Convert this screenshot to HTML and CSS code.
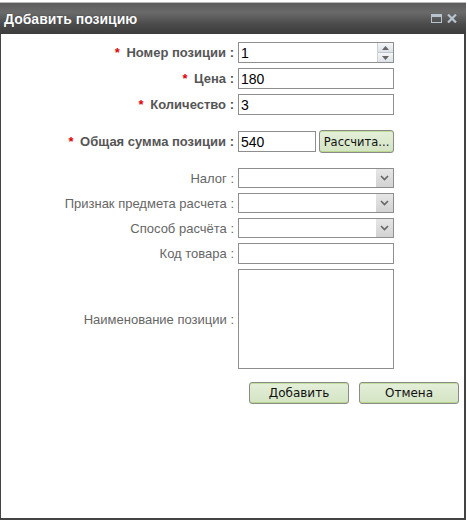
FILE: index.html
```html
<!DOCTYPE html>
<html lang="ru">
<head>
<meta charset="utf-8">
<title>Добавить позицию</title>
<link rel="stylesheet" href="styles.css">
</head>
<body>
<div class="window">
  <div class="titlebar">
    <span class="title">Добавить позицию</span>
    <span class="tools">
      <svg class="tool" width="11" height="9" viewBox="0 0 11 9"><rect x="0.5" y="0.5" width="10" height="8" fill="none" stroke="#b8c4d0" stroke-width="1"/><rect x="1" y="1" width="9" height="2" fill="#b8c4d0"/></svg>
      <svg class="tool" width="10" height="9" viewBox="0 0 10 9"><path d="M1 0.5 L9 8.5 M9 0.5 L1 8.5" stroke="#b8c4d0" stroke-width="2.2"/></svg>
    </span>
  </div>
  <div class="body">
    <div class="form">
      <div class="row">
        <label class="lbl req"><span class="star">*</span> Номер позиции :</label>
        <div class="field spin">
          <span class="val">1</span>
          <span class="spinbtns">
            <span class="sb up"><svg width="7" height="4" viewBox="0 0 7 4"><path d="M0 4 L3.5 0 L7 4Z" fill="#666"/></svg></span>
            <span class="sb down"><svg width="7" height="4" viewBox="0 0 7 4"><path d="M0 0 L3.5 4 L7 0Z" fill="#666"/></svg></span>
          </span>
        </div>
      </div>
      <div class="row">
        <label class="lbl req"><span class="star">*</span> Цена :</label>
        <div class="field"><span class="val">180</span></div>
      </div>
      <div class="row">
        <label class="lbl req"><span class="star">*</span> Количество :</label>
        <div class="field"><span class="val">3</span></div>
      </div>
      <div class="row sum">
        <label class="lbl req"><span class="star">*</span> Общая сумма позиции :</label>
        <div class="sumwrap">
          <div class="field short"><span class="val">540</span></div>
          <button class="btn calc">Рассчита...</button>
        </div>
      </div>
      <div class="row">
        <label class="lbl">Налог :</label>
        <div class="field select"><span class="arrow"><svg width="9" height="6" viewBox="0 0 9 6"><path d="M1 1 L4.5 4.5 L8 1" fill="none" stroke="#666" stroke-width="1.6"/></svg></span></div>
      </div>
      <div class="row">
        <label class="lbl">Признак предмета расчета :</label>
        <div class="field select"><span class="arrow"><svg width="9" height="6" viewBox="0 0 9 6"><path d="M1 1 L4.5 4.5 L8 1" fill="none" stroke="#666" stroke-width="1.6"/></svg></span></div>
      </div>
      <div class="row">
        <label class="lbl">Способ расчёта :</label>
        <div class="field select"><span class="arrow"><svg width="9" height="6" viewBox="0 0 9 6"><path d="M1 1 L4.5 4.5 L8 1" fill="none" stroke="#666" stroke-width="1.6"/></svg></span></div>
      </div>
      <div class="row">
        <label class="lbl">Код товара :</label>
        <div class="field"></div>
      </div>
      <div class="row">
        <label class="lbl">Наименование позиции :</label>
        <div class="field area"></div>
      </div>
    </div>
    <div class="actions">
      <button class="btn act">Добавить</button>
      <button class="btn act">Отмена</button>
    </div>
  </div>
</div>
</body>
</html>
```
FILE: styles.css
```css
html, body {
  margin: 0;
  padding: 0;
  background: #fff;
}
body {
  font-family: "Liberation Sans", Arial, sans-serif;
}
.window {
  margin-top: 2px;
  width: 466px;
  height: 518px;
  box-sizing: border-box;
  display: flex;
  flex-direction: column;
  border-top: 1px solid #bbb;
}
.titlebar {
  height: 31px;
  background: linear-gradient(#5c5c5c 0%, #6a6a6a 30%, #4a4a4a 70%, #3c3c3c 100%);
  display: flex;
  align-items: center;
  justify-content: space-between;
  padding: 0 9px 0 4px;
}
.title {
  color: #fff;
  font-weight: bold;
  font-size: 14px;
  text-shadow: 0 0 1px #223;
}
.tools {
  display: flex;
  gap: 5px;
  align-items: center;
}
.body {
  flex: 1;
  border: 1px solid #444;
  border-top: none;
  border-left-width: 1px;
  border-right-width: 2px;
  border-bottom-width: 2px;
  background: #fff;
  padding-top: 8px;
}
.form {
  display: flex;
  flex-direction: column;
  gap: 5px;
}
.row {
  display: grid;
  grid-template-columns: 233px 156px;
  column-gap: 4px;
  align-items: center;
}
.row.sum {
  margin: 10px 0;
}
.lbl {
  text-align: right;
  font-size: 13px;
  color: #666;
  white-space: nowrap;
}
.lbl.req {
  font-weight: bold;
  color: #555;
}
.star {
  color: #e00000;
  margin-right: 3px;
}
.field {
  height: 21px;
  box-sizing: border-box;
  border: 1px solid #8e8e8e;
  background: #fff;
  display: flex;
  align-items: center;
  position: relative;
}
.val {
  font-size: 14px;
  color: #000;
  padding-left: 2px;
}
.spin .spinbtns {
  position: absolute;
  right: 0;
  top: 0;
  bottom: 0;
  width: 15px;
  display: flex;
  flex-direction: column;
  border-left: 1px solid #d0d0d0;
}
.sb {
  flex: 1;
  display: flex;
  align-items: center;
  justify-content: center;
  background: linear-gradient(#f4f6f8, #dde2e8);
}
.sb.up { border-bottom: 1px solid #c0c6ce; }
.select {
  height: 20px;
}
.select .arrow {
  position: absolute;
  right: 0;
  top: 0;
  bottom: 0;
  width: 17px;
  background: linear-gradient(#e6e6e6, #d2d2d2);
  display: flex;
  align-items: center;
  justify-content: center;
}
.area {
  height: 100px;
}
.sumwrap {
  display: flex;
  align-items: center;
  gap: 3px;
}
.field.short {
  width: 78px;
}
.btn {
  font-family: "DejaVu Sans", Verdana, sans-serif;
  font-size: 11.5px;
  color: #111;
  background: linear-gradient(#e4efd9, #d3e4c3);
  border: 1px solid #8a8a8a;
  border-radius: 3px;
  box-shadow: inset 0 1px 0 #c2de9a, inset 0 -1px 0 #b9d88c;
  padding: 0;
  cursor: pointer;
}
.btn.calc {
  width: 75px;
  height: 23px;
  font-size: 11.5px;
}
.actions {
  display: flex;
  gap: 10px;
  padding-left: 248px;
  margin-top: 13px;
}
.btn.act {
  width: 100px;
  height: 22px;
  font-size: 12px;
}
```
